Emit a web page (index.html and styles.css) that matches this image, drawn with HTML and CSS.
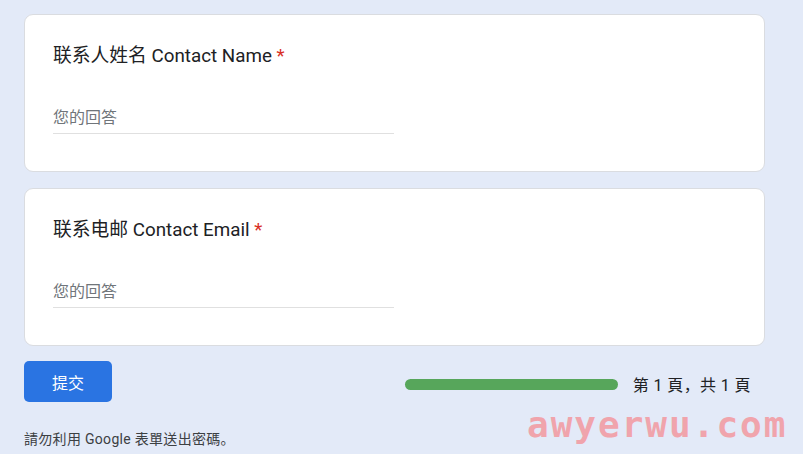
FILE: index.html
```html
<!DOCTYPE html>
<html lang="zh">
<head>
    <meta charset="UTF-8">
    <meta name="viewport" content="width=device-width, initial-scale=1.0">
    <title>Google 表單</title>
    <link rel="stylesheet" href="styles.css">
</head>
<body>

    <div class="form">
        <div class="card">
            <div class="question-title">联系人姓名 Contact Name <span class="required">*</span></div>
            <div class="answer">您的回答</div>
        </div>

        <div class="card">
            <div class="question-title">联系电邮 Contact Email <span class="required">*</span></div>
            <div class="answer">您的回答</div>
        </div>

        <div class="nav-row">
            <button class="submit-button">提交</button>
            <div class="progress">
                <div class="progress-bar"></div>
                <span class="progress-text">第 1 頁，共 1 頁</span>
            </div>
        </div>

        <p class="footer-note">請勿利用 Google 表單送出密碼。</p>
    </div>

    <!-- watermark over the screenshot -->
    <div class="watermark">awyerwu.com</div>

</body>
</html>
```

FILE: styles.css
```css
body {
    font-family: Roboto, "Noto Sans CJK TC", sans-serif;
    background-color: #e3eaf8;
    margin: 0;
    padding: 14px 38px 0 24px;
    color: #202124;
    position: relative;
    height: 454px;
    box-sizing: border-box;
    overflow: hidden;
}
.form {
    display: flex;
    flex-direction: column;
    gap: 16px;
}
.card {
    background-color: #ffffff;
    border: 1px solid #dadce0;
    border-radius: 9px;
    padding: 28px 28px 37px;
}
.question-title {
    font-family: Roboto, "Noto Sans CJK SC", sans-serif;
    font-size: 18.8px;
    line-height: 26px;
}
.required {
    color: #d93025;
}
.answer {
    margin-top: 37px;
    width: 341px;
    font-size: 16px;
    line-height: 24px;
    padding-bottom: 3px;
    color: #70757a;
    border-bottom: 1px solid #e0e0e0;
}
.nav-row {
    display: flex;
    align-items: center;
    justify-content: space-between;
    margin-top: -1px;
}
.submit-button {
    width: 88px;
    height: 41px;
    background-color: #2a74e2;
    color: white;
    border: none;
    border-radius: 5px;
    font-family: Roboto, "Noto Sans CJK TC", sans-serif;
    font-size: 16px;
    cursor: pointer;
}
.progress {
    display: flex;
    align-items: center;
    gap: 15px;
    margin-right: 14px;
    margin-top: 5px;
}
.progress-bar {
    width: 213px;
    height: 11px;
    border-radius: 6px;
    background-color: #57a65b;
}
.progress-text {
    font-size: 16px;
    letter-spacing: 0.4px;
    color: #202124;
}
.footer-note {
    margin: 10px 0 0;
    font-size: 14px;
    letter-spacing: 0.3px;
    color: #3c4043;
}
.watermark {
    position: absolute;
    left: 527px;
    top: 404px;
    font-family: "DejaVu Sans Mono", monospace;
    font-weight: bold;
    font-size: 36px;
    letter-spacing: 2px;
    color: #f0a4ac;
}
```
